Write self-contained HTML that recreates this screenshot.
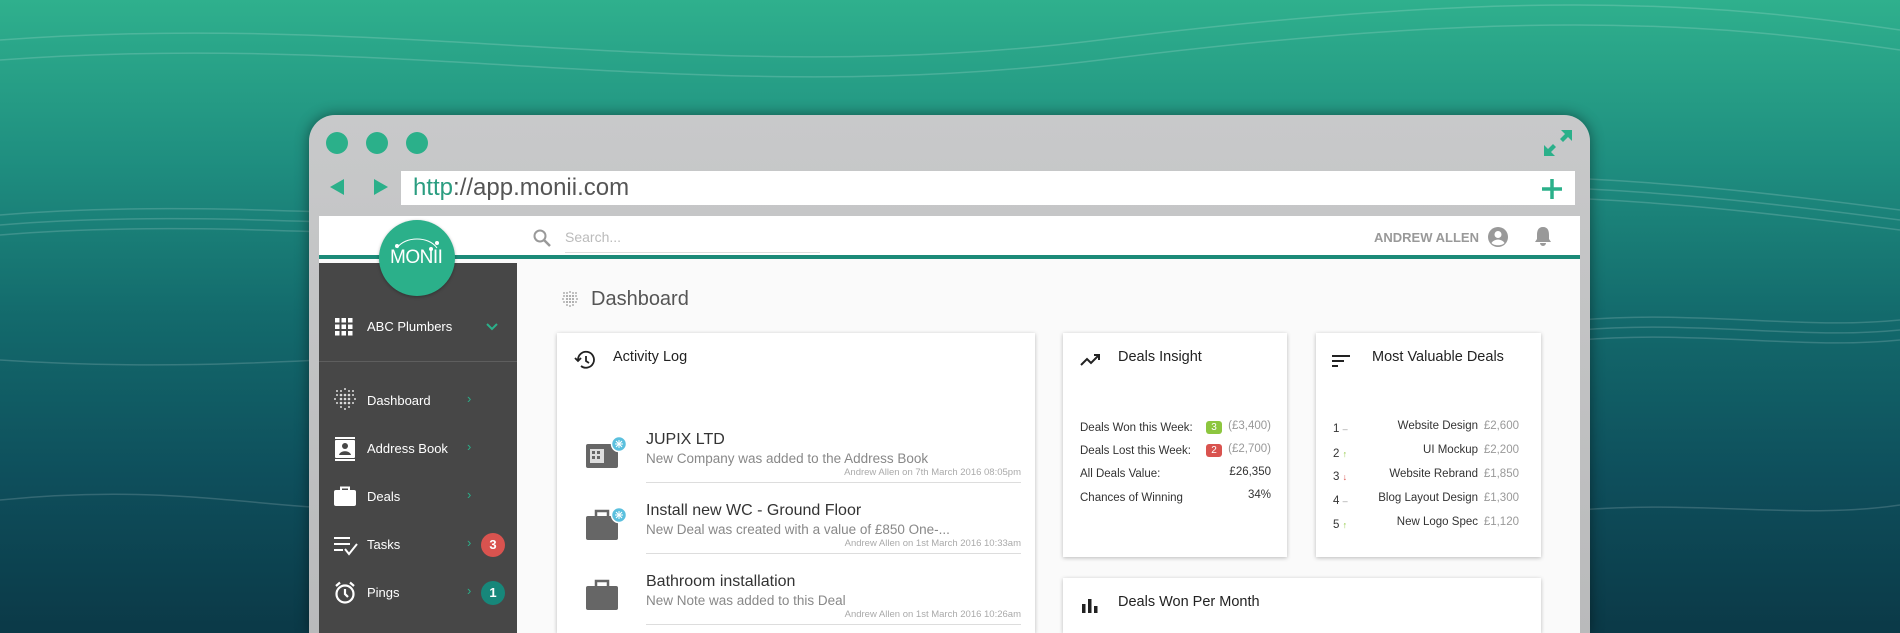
<!DOCTYPE html>
<html><head><meta charset="utf-8"><style>
*{margin:0;padding:0;box-sizing:border-box}
html,body{width:1900px;height:633px;overflow:hidden}
body{font-family:"Liberation Sans",sans-serif;background:linear-gradient(180deg,#2fb08d 0%,#1f8f80 25%,#136a6c 50%,#0e4f5c 75%,#0b3947 100%);position:relative}
.clip{position:absolute;left:0;top:0;width:1900px;height:633px;overflow:hidden}
.abs{position:absolute}
.win{left:309px;top:115px;width:1281px;height:518px;border-radius:26px 26px 0 0;background:linear-gradient(#c8c9ca,#b9babb);box-shadow:0 0 14px rgba(0,0,0,.45)}
.dot{width:22px;height:22px;border-radius:50%;background:#2bb08a;top:132px}
.url{left:401px;top:171px;width:1174px;height:34px;background:#fff}
.app{left:319px;top:216px;width:1261px;height:417px;background:#fafafa;overflow:hidden}
.hdr{left:0;top:0;width:1261px;height:43px;background:#fff;border-bottom:4px solid #1b8a78}
.side{left:0;top:47px;width:198px;height:370px;background:#474747}
.card{background:#fff;box-shadow:0 1px 4px rgba(0,0,0,.25)}
.mi{left:48px;color:#fff;font-size:13px}
.chev{left:148px;color:#2bb08a;font-size:13px}
.t{font-size:14.5px;color:#222}
.row{font-size:11.5px;color:#333}
.g{color:#999}
</style></head><body><div class="clip">
<svg class="abs" style="left:0;top:0" width="1900" height="633">
<g fill="none" stroke="#fff" stroke-opacity=".16" stroke-width="1.5">
<path d="M0 40 C400 10 700 90 1100 40 S1700 0 1900 30"/>
<path d="M0 60 C400 30 700 110 1100 60 S1700 20 1900 50"/>
<path d="M0 215 C300 190 600 250 1000 205 S1600 170 1900 210"/>
<path d="M0 225 C300 200 600 260 1000 215 S1600 180 1900 220"/>
<path d="M0 235 C300 210 600 270 1000 225 S1600 190 1900 230"/>
<path d="M0 360 C300 380 500 330 800 360"/>
<path d="M0 500 C200 480 300 520 400 505"/>
<path d="M1580 320 C1700 310 1800 330 1900 320"/>
<path d="M1580 330 C1700 320 1800 340 1900 330"/>
<path d="M1580 340 C1700 330 1800 350 1900 340"/>
<path d="M1580 510 C1700 500 1800 520 1900 505"/>
</g></svg>
<div class="abs win"></div>
<div class="abs dot" style="left:326px"></div>
<div class="abs dot" style="left:366px"></div>
<div class="abs dot" style="left:406px"></div>
<svg class="abs" style="left:326px;top:177px" width="70" height="20"><path d="M4 10 L18 2 L18 18Z M62 10 L48 2 L48 18Z" fill="#2bb08a"/></svg>
<svg class="abs" style="left:1542px;top:128px" width="32" height="30"><path d="M30 2 L19 2 L23 6 L18 11 L21 14 L26 9 L30 13Z M2 28 L13 28 L9 24 L14 19 L11 16 L6 21 L2 17Z" fill="#2bb08a"/></svg>
<div class="abs url"><span class="abs" style="left:12px;top:3px;font-size:24px;color:#555"><span style="color:#2a9d80">http</span>://app.monii.com</span>
<svg class="abs" style="left:1139px;top:6px" width="24" height="24"><path d="M12 2V22M2 12H22" stroke="#2bb08a" stroke-width="3.5"/></svg></div>
<div class="abs app">
<div class="abs hdr">
<svg class="abs" style="left:213px;top:12px" width="20" height="20"><circle cx="8" cy="8" r="5.5" fill="none" stroke="#999" stroke-width="2"/><path d="M12 12L18 18" stroke="#999" stroke-width="2.5"/></svg>
<span class="abs" style="left:246px;top:13px;font-size:14px;color:#bbb">Search...</span>
<div class="abs" style="left:246px;top:36px;width:255px;height:1px;background:#ddd"></div>
<span class="abs" style="left:1055px;top:14px;font-size:13px;color:#999;font-weight:bold">ANDREW ALLEN</span>
<svg class="abs" style="left:1168px;top:10px" width="22" height="22"><circle cx="11" cy="11" r="10" fill="#999"/><circle cx="11" cy="8.5" r="3.5" fill="#fff"/><path d="M4.5 17 C7 12.5 15 12.5 17.5 17 C15 20 7 20 4.5 17Z" fill="#fff"/></svg>
<svg class="abs" style="left:1214px;top:9px" width="20" height="22"><path d="M10 2 C5 2 4 6 4 10 V14 L2 17 H18 L16 14 V10 C16 6 15 2 10 2Z M7 18 A3 3 0 0 0 13 18Z" fill="#999"/></svg>
</div>
<div class="abs side">
<svg class="abs" style="left:16px;top:55px" width="18" height="18" fill="#fff"><rect x="0" y="0" width="4.5" height="4.5"/><rect x="6.5" y="0" width="4.5" height="4.5"/><rect x="13" y="0" width="4.5" height="4.5"/><rect x="0" y="6.5" width="4.5" height="4.5"/><rect x="6.5" y="6.5" width="4.5" height="4.5"/><rect x="13" y="6.5" width="4.5" height="4.5"/><rect x="0" y="13" width="4.5" height="4.5"/><rect x="6.5" y="13" width="4.5" height="4.5"/><rect x="13" y="13" width="4.5" height="4.5"/></svg>
<span class="abs mi" style="top:56px">ABC Plumbers</span>
<svg class="abs" style="left:166px;top:59px" width="14" height="10"><path d="M2 2L7 7L12 2" stroke="#2bb08a" stroke-width="2" fill="none"/></svg>
<div class="abs" style="left:0;top:98px;width:198px;height:1px;background:#5e5e5e"></div>
<span class="abs mi" style="top:130px">Dashboard</span><span class="abs chev" style="top:128px">›</span>
<span class="abs mi" style="top:178px">Address Book</span><span class="abs chev" style="top:176px">›</span>
<span class="abs mi" style="top:226px">Deals</span><span class="abs chev" style="top:224px">›</span>
<span class="abs mi" style="top:274px">Tasks</span><span class="abs chev" style="top:272px">›</span>
<span class="abs mi" style="top:322px">Pings</span><span class="abs chev" style="top:320px">›</span>
<svg class="abs" style="left:15px;top:125px" width="22" height="22" fill="#ddd"><g><circle cx="3" cy="3" r="1"/><circle cx="7" cy="3" r="1"/><circle cx="11" cy="1" r="1"/><circle cx="15" cy="3" r="1"/><circle cx="19" cy="3" r="1"/><circle cx="3" cy="7" r="1"/><circle cx="7" cy="7" r="1.3"/><circle cx="11" cy="7" r="1.3"/><circle cx="15" cy="7" r="1.3"/><circle cx="19" cy="7" r="1"/><circle cx="1" cy="11" r="1"/><circle cx="7" cy="11" r="1.3"/><circle cx="11" cy="11" r="1.3"/><circle cx="15" cy="11" r="1.3"/><circle cx="21" cy="11" r="1"/><circle cx="3" cy="15" r="1"/><circle cx="7" cy="15" r="1.3"/><circle cx="11" cy="15" r="1.3"/><circle cx="15" cy="15" r="1.3"/><circle cx="19" cy="15" r="1"/><circle cx="7" cy="19" r="1"/><circle cx="11" cy="21" r="1"/><circle cx="15" cy="19" r="1"/></g></svg>
<svg class="abs" style="left:15px;top:174px" width="22" height="24"><rect x="1" y="0" width="20" height="2" fill="#fff"/><rect x="1" y="22" width="20" height="2" fill="#fff"/><rect x="1" y="3" width="20" height="18" rx="1" fill="#fff"/><circle cx="11" cy="9" r="3" fill="#474747"/><path d="M5 18 C6 13 16 13 17 18Z" fill="#474747"/></svg>
<svg class="abs" style="left:15px;top:223px" width="22" height="20"><path d="M7 4 V1.5 H15 V4" stroke="#fff" stroke-width="2" fill="none"/><rect x="0" y="4" width="22" height="16" rx="2" fill="#fff"/></svg>
<svg class="abs" style="left:15px;top:272px" width="24" height="22" stroke="#fff" stroke-width="2" fill="none"><path d="M0 3H16M0 9H16M0 15H9M11 14L15 19L23 9"/></svg>
<svg class="abs" style="left:15px;top:318px" width="22" height="24" stroke="#fff" stroke-width="2.2" fill="none"><circle cx="11" cy="13" r="8.5"/><path d="M11 8V13L14 16M2 5L6 1.5M20 5L16 1.5"/></svg>
<div class="abs" style="left:162px;top:270px;width:24px;height:24px;border-radius:50%;background:#d9534f;color:#fff;font-size:13px;font-weight:bold;text-align:center;line-height:24px">3</div>
<div class="abs" style="left:162px;top:318px;width:24px;height:24px;border-radius:50%;background:#17877a;color:#fff;font-size:13px;font-weight:bold;text-align:center;line-height:24px">1</div>
</div>
<div class="abs" style="left:60px;top:4px;width:76px;height:76px;border-radius:50%;background:#2bb08a;box-shadow:0 1px 3px rgba(0,0,0,.3)">
<svg class="abs" style="left:10px;top:14px" width="56" height="20"><path d="M8 14 C16 2 40 2 48 14" stroke="#fff" stroke-width="1" fill="none"/><circle cx="8" cy="12" r="2" fill="#fff"/><circle cx="48" cy="9" r="2" fill="#fff"/><circle cx="42" cy="15" r="2" fill="#fff"/></svg>
<span class="abs" style="left:11px;top:27px;font-size:19px;color:#fff;letter-spacing:-.5px">MONII</span></div>
<svg class="abs" style="left:243px;top:75px" width="16" height="16" fill="#999"><g><circle cx="2" cy="2" r=".9"/><circle cx="5" cy="2" r=".9"/><circle cx="8" cy="1" r=".9"/><circle cx="11" cy="2" r=".9"/><circle cx="14" cy="2" r=".9"/><circle cx="2" cy="5" r=".9"/><circle cx="5" cy="5" r="1"/><circle cx="8" cy="5" r="1"/><circle cx="11" cy="5" r="1"/><circle cx="14" cy="5" r=".9"/><circle cx="1" cy="8" r=".9"/><circle cx="5" cy="8" r="1"/><circle cx="8" cy="8" r="1"/><circle cx="11" cy="8" r="1"/><circle cx="15" cy="8" r=".9"/><circle cx="2" cy="11" r=".9"/><circle cx="5" cy="11" r="1"/><circle cx="8" cy="11" r="1"/><circle cx="11" cy="11" r="1"/><circle cx="14" cy="11" r=".9"/><circle cx="5" cy="14" r=".9"/><circle cx="8" cy="15" r=".9"/><circle cx="11" cy="14" r=".9"/></g></svg>
<span class="abs" style="left:272px;top:72px;font-size:20px;color:#555">Dashboard</span>
<div class="abs card" style="left:238px;top:117px;width:478px;height:300px">
<svg class="abs" style="left:17px;top:17px" width="22" height="20" fill="none" stroke="#222" stroke-width="1.8"><path d="M4 10 A8 8 0 1 1 7 16"/><path d="M1 8L4 11L7 8"/><path d="M12 6V11L15 13"/></svg>
<span class="abs t" style="left:56px;top:16px">Activity Log</span>
<div class="abs" style="left:89px;top:98px;font-size:16px;color:#333">JUPIX LTD</div>
<div class="abs" style="left:89px;top:118px;font-size:13.5px;color:#888">New Company was added to the Address Book</div>
<div class="abs" style="left:89px;top:134px;width:375px;text-align:right;font-size:9.5px;color:#aaa">Andrew Allen on 7th March 2016 08:05pm</div>
<div class="abs" style="left:89px;top:149px;width:375px;height:1px;background:#ddd"></div>
<div class="abs" style="left:89px;top:169px;font-size:16px;color:#333">Install new WC - Ground Floor</div>
<div class="abs" style="left:89px;top:189px;font-size:13.5px;color:#888">New Deal was created with a value of £850 One-...</div>
<div class="abs" style="left:89px;top:205px;width:375px;text-align:right;font-size:9.5px;color:#aaa">Andrew Allen on 1st March 2016 10:33am</div>
<div class="abs" style="left:89px;top:220px;width:375px;height:1px;background:#ddd"></div>
<div class="abs" style="left:89px;top:240px;font-size:16px;color:#333">Bathroom installation</div>
<div class="abs" style="left:89px;top:260px;font-size:13.5px;color:#888">New Note was added to this Deal</div>
<div class="abs" style="left:89px;top:276px;width:375px;text-align:right;font-size:9.5px;color:#aaa">Andrew Allen on 1st March 2016 10:26am</div>
<div class="abs" style="left:89px;top:291px;width:375px;height:1px;background:#ddd"></div>
<svg class="abs" style="left:29px;top:103px" width="44" height="34"><rect x="0" y="8" width="32" height="24" rx="2" fill="#666"/><rect x="4" y="13" width="14" height="14" fill="#ddd"/><g fill="#666"><rect x="6" y="15" width="3" height="3"/><rect x="11" y="15" width="3" height="3"/><rect x="6" y="20" width="3" height="3"/><rect x="11" y="20" width="3" height="3"/></g><circle cx="33" cy="8" r="7.5" fill="#5bc0de" stroke="#fff" stroke-width="1.5"/><path d="M33 4V12M29 8H37M30 5L36 11M36 5L30 11" stroke="#fff" stroke-width="1"/></svg>
<svg class="abs" style="left:29px;top:173px" width="44" height="36"><path d="M10 10V5H22V10" stroke="#666" stroke-width="2.5" fill="none"/><rect x="0" y="10" width="32" height="24" rx="2" fill="#666"/><circle cx="33" cy="9" r="7.5" fill="#5bc0de" stroke="#fff" stroke-width="1.5"/><path d="M33 5V13M29 9H37M30 6L36 12M36 6L30 12" stroke="#fff" stroke-width="1"/></svg>
<svg class="abs" style="left:29px;top:243px" width="36" height="36"><path d="M10 10V5H22V10" stroke="#666" stroke-width="2.5" fill="none"/><rect x="0" y="10" width="32" height="24" rx="2" fill="#666"/></svg>
</div>
<div class="abs card" style="left:744px;top:117px;width:224px;height:224px">
<svg class="abs" style="left:17px;top:20px" width="22" height="14" fill="none" stroke="#222" stroke-width="2"><path d="M1 12L7 6L11 10L19 2M14 2H19V7"/></svg>
<span class="abs t" style="left:55px;top:16px">Deals Insight</span>
<div class="abs row" style="left:17px;top:89px">Deals Won this Week:</div>
<div class="abs row" style="left:17px;top:112px">Deals Lost this Week:</div>
<div class="abs row" style="left:17px;top:135px">All Deals Value:</div>
<div class="abs row" style="left:17px;top:159px">Chances of Winning</div>
<div class="abs" style="left:143px;top:88px;width:16px;height:13px;background:#8dc63f;border-radius:3px;color:#fff;font-size:10px;text-align:center;line-height:13px">3</div>
<div class="abs" style="left:143px;top:111px;width:16px;height:13px;background:#d9534f;border-radius:3px;color:#fff;font-size:10px;text-align:center;line-height:13px">2</div>
<div class="abs row g" style="right:16px;top:87px">(£3,400)</div>
<div class="abs row g" style="right:16px;top:110px">(£2,700)</div>
<div class="abs row" style="right:16px;top:133px">£26,350</div>
<div class="abs row" style="right:16px;top:156px">34%</div>
</div>
<div class="abs card" style="left:997px;top:117px;width:225px;height:224px">
<svg class="abs" style="left:16px;top:22px" width="20" height="14" fill="#222"><rect x="0" y="0" width="18" height="2"/><rect x="0" y="5" width="12" height="2"/><rect x="0" y="10" width="6" height="2"/></svg>
<span class="abs t" style="left:56px;top:16px">Most Valuable Deals</span>
<div class="abs row" style="left:17px;top:90px">1 <span class="g" style="font-size:9px">–</span></div>
<div class="abs row" style="left:17px;top:115px">2 <span style="color:#8dc63f;font-size:9px">↑</span></div>
<div class="abs row" style="left:17px;top:138px">3 <span style="color:#d9534f;font-size:9px">↓</span></div>
<div class="abs row" style="left:17px;top:162px">4 <span class="g" style="font-size:9px">–</span></div>
<div class="abs row" style="left:17px;top:186px">5 <span style="color:#8dc63f;font-size:9px">↑</span></div>
<div class="abs row" style="right:63px;top:87px">Website Design</div><div class="abs row g" style="right:22px;top:87px">£2,600</div>
<div class="abs row" style="right:63px;top:111px">UI Mockup</div><div class="abs row g" style="right:22px;top:111px">£2,200</div>
<div class="abs row" style="right:63px;top:135px">Website Rebrand</div><div class="abs row g" style="right:22px;top:135px">£1,850</div>
<div class="abs row" style="right:63px;top:159px">Blog Layout Design</div><div class="abs row g" style="right:22px;top:159px">£1,300</div>
<div class="abs row" style="right:63px;top:183px">New Logo Spec</div><div class="abs row g" style="right:22px;top:183px">£1,120</div>
</div>
<div class="abs card" style="left:744px;top:362px;width:478px;height:55px">
<svg class="abs" style="left:19px;top:19px" width="16" height="16" fill="#222"><rect x="0" y="7" width="3.5" height="9"/><rect x="6" y="2" width="3.5" height="14"/><rect x="12" y="9" width="3.5" height="7"/></svg>
<span class="abs t" style="left:55px;top:16px">Deals Won Per Month</span>
</div>
</div>
</div></body></html>
